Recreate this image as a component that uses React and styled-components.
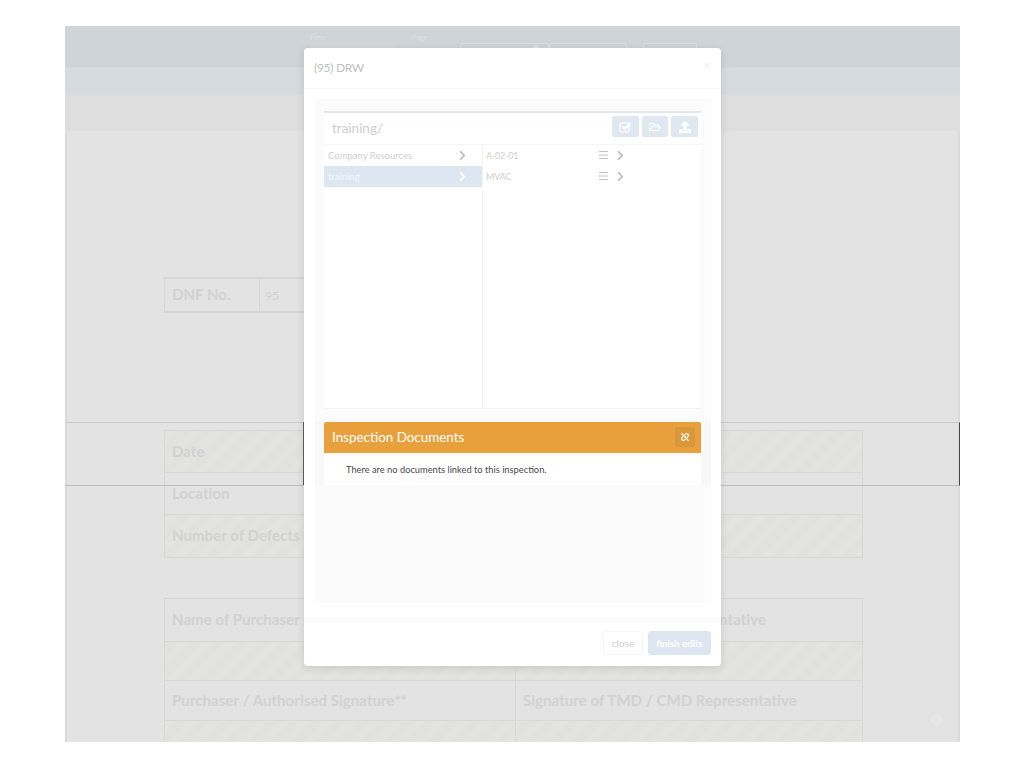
import React from 'react';
import styled, { createGlobalStyle } from 'styled-components';
import { FaRegFolderOpen, FaUpload, FaChevronRight, FaUnlink } from 'react-icons/fa';

const Global = createGlobalStyle`
  html, body { margin: 0; padding: 0; background: #fff; }
  body { font-family: Lato, "Noto Sans", sans-serif; overflow: hidden; }
  * { box-sizing: border-box; }
`;

const hatch = 'repeating-linear-gradient(-45deg, #e3e3e2 0 8px, #e1e1e0 8px 16px)';

const Stage = styled.div`
  position: relative;
  width: 1024px;
  height: 768px;
  padding: 26px 64px 26px 65px;
`;

const Sheet = styled.div`
  height: 716px;
  overflow: hidden;
  background: #e3e3e3;
  display: flex;
  flex-direction: column;
`;

const TopBar = styled.div`
  flex: none;
  height: 41px;
  background: #cfd4d8;
  display: flex;
  align-items: flex-start;
  padding: 7px 0 0 245px;
  color: #dce0e3;
  font-size: 7px;
`;

const TopField = styled.div`
  width: ${p => p.$w}px;
  flex: none;
`;

const SelectBox = styled.div`
  width: 87px;
  height: 20px;
  margin-top: 2px;
  background: #d3d7da;
`;

const OutlineBox = styled.div`
  width: ${p => p.$w}px;
  height: 20px;
  flex: none;
  margin: 10px ${p => p.$gap || 0}px 0 0;
  border: 1px solid #dbdfe2;
  border-radius: 2px;
  display: flex;
  justify-content: flex-end;
  padding: 1px 8px 0 0;
`;

const BoxDot = styled.div`
  width: 8px;
  height: 8px;
  border-radius: 50%;
  background: #dce0e3;
`;

const SubBar = styled.div`
  flex: none;
  height: 27px;
  background: #d5dbdf;
`;

const ToolBand = styled.div`
  flex: none;
  height: 37px;
  background: #dedede;
`;

const Body = styled.div`
  flex: 1;
  min-height: 0;
  padding: 146px 95px 0 97px;
  border-left: 2px solid #dadada;
  border-right: 2px solid #dadada;
`;

const SmallTable = styled.div`
  width: 300px;
  height: 36px;
  display: grid;
  grid-template-columns: 94px 1fr;
  border: 1px solid #d6d6d6;
  border-width: 2px 1px;
`;

const FormTable = styled.div`
  width: 699px;
  margin-top: ${p => p.$top}px;
  border: 1px solid #d8d8d8;
  border-bottom: ${p => (p.$open ? 'none' : '1px solid #d8d8d8')};
`;

const Row = styled.div`
  height: ${p => p.$h}px;
  display: grid;
  grid-template-columns: ${p => (p.$split ? '350px 1fr' : '1fr')};
  border-bottom: ${p => (p.$last ? 'none' : '1px solid #d8d8d8')};
  background: ${p => (p.$fill ? hatch : 'transparent')};
`;

const Label = styled.div`
  display: flex;
  align-items: center;
  padding: 0 0 2px 7px;
  color: #d2d2d2;
  font-size: 15px;
  font-weight: 700;
  letter-spacing: 0.05px;
  white-space: nowrap;
  & + & { border-left: 1px solid #d8d8d8; }
`;

const RightLabel = styled(Label)`
  justify-content: flex-end;
  padding: 0 96px 2px 0;
`;

const Value = styled.div`
  display: flex;
  align-items: center;
  padding-left: 5px;
  color: #d2d2d2;
  font-size: 12px;
  border-left: 1px solid #d8d8d8;
`;

const Hatch = styled.div`
  background: ${hatch};
  & + & { border-left: 1px solid #d8d8d8; }
`;

const Band = styled.div`
  position: absolute;
  left: 65px;
  top: 422px;
  width: 895px;
  height: 64px;
  border-top: 1px solid #cacaca;
  border-bottom: 1px solid #bdbdbd;
  border-right: 1px solid #4a4a4a;
`;

const Diamond = styled.svg`
  position: absolute;
  left: 929px;
  top: 712px;
  width: 16px;
  height: 16px;
`;

const Modal = styled.div`
  position: absolute;
  left: 304px;
  top: 48px;
  width: 417px;
  height: 618px;
  background: #fff;
  border-radius: 4px;
  box-shadow: 0 2px 8px rgba(0, 0, 0, 0.12);
  display: flex;
  flex-direction: column;
  &::before {
    content: '';
    position: absolute;
    left: -1px;
    top: 374px;
    width: 1px;
    height: 63px;
    background: #5a5a5a;
  }
`;

const ModalHeader = styled.div`
  height: 41px;
  flex: none;
  display: flex;
  align-items: center;
  justify-content: space-between;
  padding: 0 10px 2px;
  border-bottom: 1px solid #f7f7f7;
`;

const ModalTitle = styled.div`
  color: #c0c0c0;
  font-size: 12px;
  letter-spacing: -0.3px;
`;

const CloseMark = styled.div`
  color: #f0f0f0;
  font-size: 14px;
  margin-top: -6px;
`;

const ModalBody = styled.div`
  flex: 1;
  padding: 10px 10px 18px 11px;
`;

const Well = styled.div`
  position: relative;
  height: 504px;
  background: #fbfbfb;
  padding: 12px 10px 0 9px;
`;

const Browser = styled.div`
  background: #fff;
  border-top: 2px solid #dfe8f1;
  height: 298px;
  border-bottom: 1px solid #f5f5f5;
  display: flex;
  flex-direction: column;
`;

const PathRow = styled.div`
  height: 32px;
  flex: none;
  display: flex;
  align-items: center;
  justify-content: space-between;
  padding: 0 3px 0 8px;
  border-bottom: 1px solid #f5f5f5;
`;

const PathText = styled.div`
  color: #cdcdcd;
  font-size: 13.5px;
  margin-top: -1px;
`;

const Tools = styled.div`
  display: flex;
  gap: 3px;
  margin-top: -4px;
`;

const ToolButton = styled.div`
  width: 26.6px;
  height: 21px;
  border-radius: 2px;
  background: #dfe8f0;
  color: #fff;
  font-size: 12px;
  display: flex;
  align-items: center;
  justify-content: center;
`;

const Columns = styled.div`
  flex: 1;
  display: grid;
  grid-template-columns: 158px 1fr;
`;

const Column = styled.div`
  & + & { border-left: 1px solid #f3f3f3; }
  display: flex;
  flex-direction: column;
`;

const Item = styled.div`
  height: 21px;
  display: flex;
  align-items: center;
  justify-content: space-between;
  padding: 0 14px 1px 4px;
  background: ${p => (p.$active ? '#dde7f2' : 'transparent')};
  color: ${p => (p.$active ? '#f4f7fa' : '#d0d0d0')};
  font-size: 9.5px;
  svg { font-size: 11px; color: ${p => (p.$active ? '#fff' : '#bdbdbd')}; }
`;

const FileItem = styled(Item)`
  padding: 0 75px 1px 3px;
  font-size: 9px;
  letter-spacing: -0.2px;
`;

const FileIcons = styled.div`
  display: flex;
  align-items: center;
  gap: 7px;
`;

const DocsSection = styled.div`
  position: absolute;
  left: 0;
  right: 0;
  top: 323px;
  height: 63px;
  padding: 0 10px 0 9px;
  background: #f8f8f8;
`;

const DocsHead = styled.div`
  height: 31px;
  background: #e7a03c;
  display: flex;
  align-items: center;
  justify-content: space-between;
  padding: 0 6px 1px 8px;
  color: #fff;
  font-size: 13.4px;
  border-radius: 2px 2px 0 0;
`;

const DocsLink = styled.div`
  width: 20px;
  height: 20px;
  background: #d8973a;
  border-radius: 2px;
  font-size: 8px;
  display: flex;
  align-items: center;
  justify-content: center;
`;

const DocsBody = styled.div`
  height: 32px;
  background: #fff;
  padding-left: 22px;
  display: flex;
  align-items: center;
  color: #4a4a4a;
  font-size: 9.3px;
`;

const ModalFooter = styled.div`
  height: 45px;
  flex: none;
  border-top: 1px solid #f7f7f7;
  display: flex;
  justify-content: flex-end;
  align-items: flex-start;
  gap: 5px;
  padding: 9px 10px 0;
`;

const FooterButton = styled.div`
  width: ${p => (p.$primary ? 63 : 40)}px;
  height: 24px;
  display: flex;
  align-items: center;
  justify-content: center;
  border-radius: 3px;
  font-size: ${p => (p.$primary ? 9.6 : 10)}px;
  border: 1px solid ${p => (p.$primary ? '#dde6f0' : '#f5f5f5')};
  background: ${p => (p.$primary ? '#dde6f0' : '#fff')};
  color: ${p => (p.$primary ? '#fff' : '#cfcfcf')};
  font-weight: ${p => (p.$primary ? 700 : 400)};
`;

function CheckIcon() {
  return (
    <svg width="13" height="12" viewBox="0 0 13 12" fill="none" stroke="#fff">
      <rect x="1" y="2" width="9" height="9" rx="1.5" strokeWidth="1.2" />
      <path d="M3.5 5.5l2.5 2.5 5.5-6" strokeWidth="2" />
    </svg>
  );
}

function BarsIcon() {
  return (
    <svg width="9" height="8" viewBox="0 0 9 8" stroke="#c4c4c4" strokeWidth="1">
      <path d="M0 .5h9M0 4h9M0 7.5h9" />
    </svg>
  );
}

export default function App() {
  return (
    <Stage>
      <Global />
      <Sheet>
        <TopBar>
          <TopField $w={102}>Form<SelectBox /></TopField>
          <TopField $w={48}>Page</TopField>
          <OutlineBox $w={89}><BoxDot /></OutlineBox>
          <OutlineBox $w={78} $gap={16} />
          <OutlineBox $w={54} />
        </TopBar>
        <SubBar />
        <ToolBand />
        <Body>
          <SmallTable>
            <Label>DNF No.</Label>
            <Value>95</Value>
          </SmallTable>
          <FormTable $top={117}>
            <Row $h={42} $fill><Label>Date</Label></Row>
            <Row $h={42}><Label>Location</Label></Row>
            <Row $h={42} $last $fill><Label>Number of Defects</Label></Row>
          </FormTable>
          <FormTable $top={40} $open>
            <Row $h={43} $split>
              <Label>Name of Purchaser</Label>
              <RightLabel>ntative</RightLabel>
            </Row>
            <Row $h={39} $split><Hatch /><Hatch /></Row>
            <Row $h={40} $split>
              <Label>Purchaser / Authorised Signature**</Label>
              <Label>Signature of TMD / CMD Representative</Label>
            </Row>
            <Row $h={24} $split $last><Hatch /><Hatch /></Row>
          </FormTable>
        </Body>
      </Sheet>
      <Band />
      <Diamond viewBox="0 0 16 16">
        <path d="M8 1l7 7-7 7-7-7z" fill="#e7e7e7" />
        <path d="M5 8l3-3M6 10l3-3M8 11l2-2" stroke="#e1e1e1" strokeWidth="1" />
      </Diamond>
      <Modal>
        <ModalHeader>
          <ModalTitle>(95) DRW</ModalTitle>
          <CloseMark>×</CloseMark>
        </ModalHeader>
        <ModalBody>
          <Well>
            <Browser>
              <PathRow>
                <PathText>training/</PathText>
                <Tools>
                  <ToolButton><CheckIcon /></ToolButton>
                  <ToolButton><FaRegFolderOpen /></ToolButton>
                  <ToolButton><FaUpload /></ToolButton>
                </Tools>
              </PathRow>
              <Columns>
                <Column>
                  <Item>Company Resources <FaChevronRight /></Item>
                  <Item $active>training <FaChevronRight /></Item>
                </Column>
                <Column>
                  <FileItem>A-02-01 <FileIcons><BarsIcon /><FaChevronRight /></FileIcons></FileItem>
                  <FileItem>MVAC <FileIcons><BarsIcon /><FaChevronRight /></FileIcons></FileItem>
                </Column>
              </Columns>
            </Browser>
            <DocsSection>
              <DocsHead>
                Inspection Documents
                <DocsLink><FaUnlink /></DocsLink>
              </DocsHead>
              <DocsBody>There are no documents linked to this inspection.</DocsBody>
            </DocsSection>
          </Well>
        </ModalBody>
        <ModalFooter>
          <FooterButton>close</FooterButton>
          <FooterButton $primary>finish edits</FooterButton>
        </ModalFooter>
      </Modal>
    </Stage>
  );
}
